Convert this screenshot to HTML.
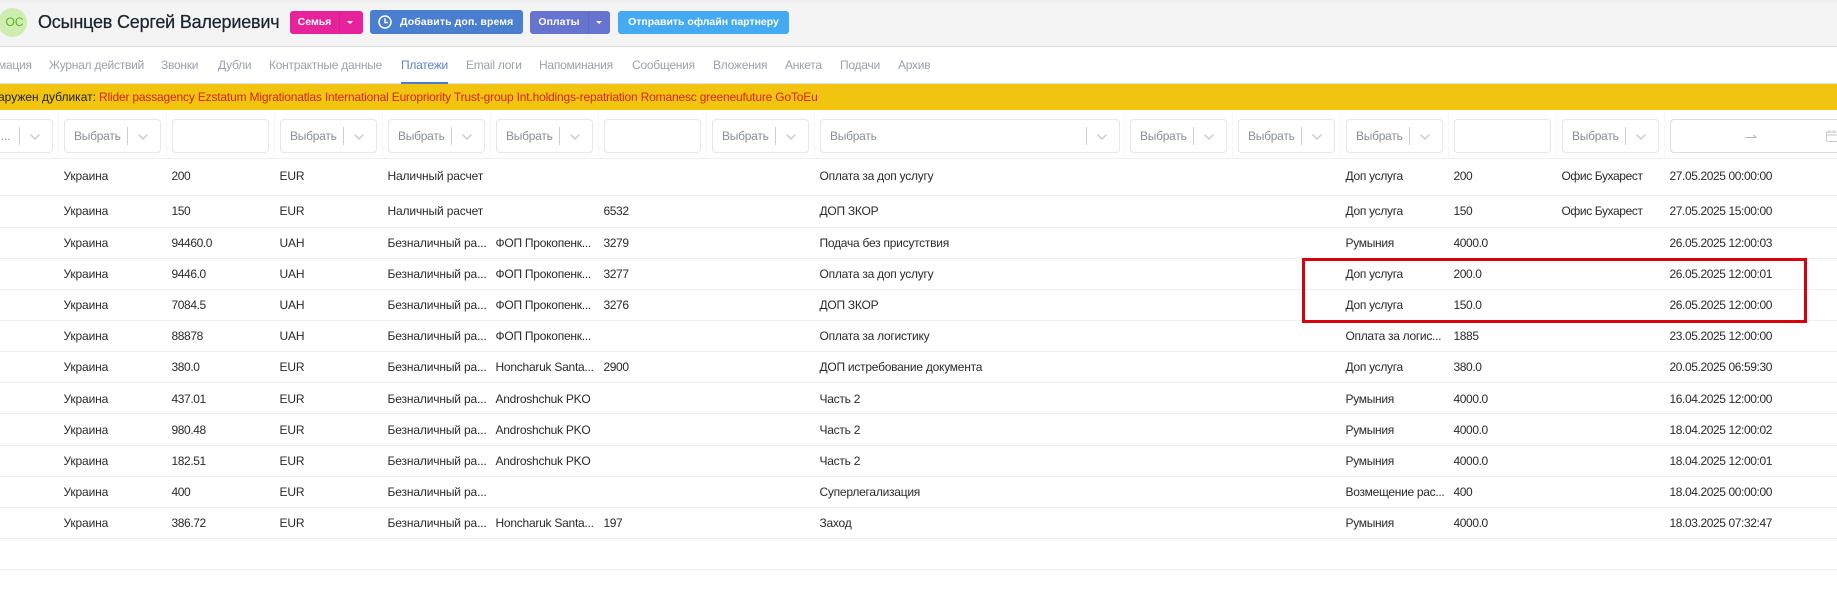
<!DOCTYPE html>
<html lang="ru"><head><meta charset="utf-8"><title>Платежи</title>
<style>
*{box-sizing:border-box}
html,body{margin:0;padding:0;width:1837px;height:591px;overflow:hidden;background:#fff}
body{position:relative;font-family:"Liberation Sans",sans-serif;font-size:12px;color:#222}
.a{position:absolute;white-space:nowrap}
.hd{left:0;top:0;width:1837px;height:47px;background:linear-gradient(#ececec 0,#f4f4f4 5px);border-bottom:1px solid #dcdcdc}
.av{left:-2px;top:8px;width:29px;height:29px;border-radius:50%;background:#cdeeb0;color:#5cb318;font-size:12px;line-height:29px;text-align:center;padding-left:4px}
.nm{left:38px;top:10px;font-size:18px;line-height:24px;color:#1c2430;font-weight:400;letter-spacing:-.2px;-webkit-text-stroke:.25px #1c2430}
.b{height:23px;top:11px;border-radius:3px;color:#fff;font-weight:700;font-size:10.5px;line-height:23px;text-align:center}
.d{top:0;bottom:0;width:1px;background:rgba(0,0,0,.07)}
.car{width:0;height:0;border-left:3.5px solid transparent;border-right:3.5px solid transparent;border-top:3.5px solid #fff;top:10px}
.t{top:57px;line-height:16px;color:#9ca1ae;font-size:12px;letter-spacing:-.25px}
.yl{left:0;top:84px;width:1837px;height:26px;background:#f1c40f;font-size:12px;line-height:26px}
.s{top:119px;height:34px;width:97px;background:#fff;border:1px solid #e4e7ee;border-radius:4px}
.s i{position:absolute;left:9px;top:0;line-height:32px;color:#888e99;font-style:normal;font-size:12px;letter-spacing:-.25px}
.s b{position:absolute;left:62px;top:7px;width:1px;height:18px;background:#cfcfcf}
.s svg{position:absolute;left:73px;top:14px}
.f{top:110px;width:1px;height:48px;background:#f6f6f6}
.l{left:0;width:1837px;height:1px;background:#efefef}
.r span{position:absolute;white-space:nowrap;line-height:16px;top:0;letter-spacing:-.15px}
.r{position:absolute;left:-.5px;width:1837px;height:16px;color:#2a2a2a}
.c1{left:64px}.c2{left:172px}.c3{left:280px}.c4{left:388px}.c5{left:496px}.c6{left:604px}.c7{left:820px}.c8{left:1346px}.c9{left:1454px}.c10{left:1562px}.c11{left:1670px}
.r .c2,.r .c6,.r .c9,.r .c11{letter-spacing:-.4px}
.r .c5,.r .c7{letter-spacing:-.25px}
.r .c8{letter-spacing:-.3px}
.r .c10{letter-spacing:-.4px}
.box{left:1302px;top:258px;width:505px;height:65px;border:3px solid #d8000f}
</style></head><body>
<div class="a hd"></div>
<div class="a av">ОС</div>
<div class="a nm">Осынцев Сергей Валериевич</div>

<div class="a b" style="left:290px;width:73px;background:#e6239b"><span class="a" style="left:0;width:49px">Семья</span><span class="a d" style="left:49px"></span><span class="a car" style="left:57px"></span></div>
<div class="a b" style="left:370px;top:10px;height:24px;width:153px;background:#4a7fd0;line-height:25px"><svg class="a" style="left:8px;top:5px" width="14" height="14" viewBox="0 0 14 14" fill="none" stroke="#fff" stroke-width="1.5"><circle cx="7" cy="7" r="6"/><path d="M7 3.2V7.5H10"/></svg><span class="a" style="left:30px;letter-spacing:.1px">Добавить доп. время</span></div>
<div class="a b" style="left:530px;width:80px;background:#6774cf"><span class="a" style="left:0;width:58px">Оплаты</span><span class="a d" style="left:58px"></span><span class="a car" style="left:66px"></span></div>
<div class="a b" style="left:618px;width:171px;background:#44aaf2">Отправить офлайн партнеру</div>

<div class="a t" style="left:-2px">мация</div>
<div class="a t" style="left:49px">Журнал действий</div>
<div class="a t" style="left:161px">Звонки</div>
<div class="a t" style="left:218px">Дубли</div>
<div class="a t" style="left:269px">Контрактные данные</div>
<div class="a t" style="left:401px;color:#5b82c4">Платежи</div>
<div class="a t" style="left:466px">Email логи</div>
<div class="a t" style="left:539px">Напоминания</div>
<div class="a t" style="left:632px">Сообщения</div>
<div class="a t" style="left:713px">Вложения</div>
<div class="a t" style="left:785px">Анкета</div>
<div class="a t" style="left:840px">Подачи</div>
<div class="a t" style="left:898px">Архив</div>
<div class="a" style="left:0;top:83px;width:1837px;height:1px;background:#e2e2e2"></div>
<div class="a" style="left:401px;top:82px;width:47px;height:2px;background:#4a7fd0"></div>

<div class="a yl"><span class="a" style="left:-2px;color:#222">аружен дубликат:</span><span class="a" style="left:99px;color:#d8231f;letter-spacing:-.18px">Rlider passagency Ezstatum Migrationatlas International Europriority Trust-group Int.holdings-repatriation Romanesc greeneufuture GoToEu</span></div>

<div class="a f" style="left:58px"></div><div class="a f" style="left:166px"></div><div class="a f" style="left:274px"></div><div class="a f" style="left:382px"></div><div class="a f" style="left:490px"></div><div class="a f" style="left:598px"></div><div class="a f" style="left:706px"></div><div class="a f" style="left:814px"></div><div class="a f" style="left:1124px"></div><div class="a f" style="left:1232px"></div><div class="a f" style="left:1340px"></div><div class="a f" style="left:1448px"></div><div class="a f" style="left:1556px"></div><div class="a f" style="left:1664px"></div>

<div class="a s" style="left:-44px"><i style="left:44px">...</i><b></b><svg width="10" height="6" viewBox="0 0 10 6" fill="none" stroke="#c6cad2" stroke-width="1.4"><path d="M.5 .5L5 5L9.5 .5"/></svg></div>
<div class="a s" style="left:64px"><i>Выбрать</i><b></b><svg width="10" height="6" viewBox="0 0 10 6" fill="none" stroke="#c6cad2" stroke-width="1.4"><path d="M.5 .5L5 5L9.5 .5"/></svg></div>
<div class="a s" style="left:172px"></div>
<div class="a s" style="left:280px"><i>Выбрать</i><b></b><svg width="10" height="6" viewBox="0 0 10 6" fill="none" stroke="#c6cad2" stroke-width="1.4"><path d="M.5 .5L5 5L9.5 .5"/></svg></div>
<div class="a s" style="left:388px"><i>Выбрать</i><b></b><svg width="10" height="6" viewBox="0 0 10 6" fill="none" stroke="#c6cad2" stroke-width="1.4"><path d="M.5 .5L5 5L9.5 .5"/></svg></div>
<div class="a s" style="left:496px"><i>Выбрать</i><b></b><svg width="10" height="6" viewBox="0 0 10 6" fill="none" stroke="#c6cad2" stroke-width="1.4"><path d="M.5 .5L5 5L9.5 .5"/></svg></div>
<div class="a s" style="left:604px"></div>
<div class="a s" style="left:712px"><i>Выбрать</i><b></b><svg width="10" height="6" viewBox="0 0 10 6" fill="none" stroke="#c6cad2" stroke-width="1.4"><path d="M.5 .5L5 5L9.5 .5"/></svg></div>
<div class="a s" style="left:820px;width:300px"><i>Выбрать</i><b style="left:265px"></b><svg style="left:276px" width="10" height="6" viewBox="0 0 10 6" fill="none" stroke="#c6cad2" stroke-width="1.4"><path d="M.5 .5L5 5L9.5 .5"/></svg></div>
<div class="a s" style="left:1130px"><i>Выбрать</i><b></b><svg width="10" height="6" viewBox="0 0 10 6" fill="none" stroke="#c6cad2" stroke-width="1.4"><path d="M.5 .5L5 5L9.5 .5"/></svg></div>
<div class="a s" style="left:1238px"><i>Выбрать</i><b></b><svg width="10" height="6" viewBox="0 0 10 6" fill="none" stroke="#c6cad2" stroke-width="1.4"><path d="M.5 .5L5 5L9.5 .5"/></svg></div>
<div class="a s" style="left:1346px"><i>Выбрать</i><b></b><svg width="10" height="6" viewBox="0 0 10 6" fill="none" stroke="#c6cad2" stroke-width="1.4"><path d="M.5 .5L5 5L9.5 .5"/></svg></div>
<div class="a s" style="left:1454px"></div>
<div class="a s" style="left:1562px"><i>Выбрать</i><b></b><svg width="10" height="6" viewBox="0 0 10 6" fill="none" stroke="#c6cad2" stroke-width="1.4"><path d="M.5 .5L5 5L9.5 .5"/></svg></div>
<div class="a s" style="left:1670px;width:180px;border-color:#dcdcdc"></div>
<svg class="a" style="left:1745px;top:134px" width="12" height="5" viewBox="0 0 12 5" fill="none" stroke="#b5b5b5" stroke-width="1"><path d="M0 3.5H11L8.5 1"/></svg>
<svg class="a" style="left:1826px;top:130px" width="11" height="12" viewBox="0 0 11 12" fill="none" stroke="#c8c8c8" stroke-width="1"><rect x=".5" y="2" width="12" height="9.5" rx="1"/><path d="M0 5H11M3 0V3M8 0V3"/></svg>

<div class="a l" style="top:158px"></div><div class="a l" style="top:195px"></div><div class="a l" style="top:227px"></div><div class="a l" style="top:258px"></div><div class="a l" style="top:289px"></div><div class="a l" style="top:320px"></div><div class="a l" style="top:351px"></div><div class="a l" style="top:382px"></div><div class="a l" style="top:413px"></div><div class="a l" style="top:445px"></div><div class="a l" style="top:476px"></div><div class="a l" style="top:507px"></div><div class="a l" style="top:538px"></div><div class="a l" style="top:569px"></div>

<div class="r" style="top:168px"><span class="c1">Украина</span><span class="c2">200</span><span class="c3">EUR</span><span class="c4">Наличный расчет</span><span class="c7">Оплата за доп услугу</span><span class="c8">Доп услуга</span><span class="c9">200</span><span class="c10">Офис Бухарест</span><span class="c11">27.05.2025 00:00:00</span></div>
<div class="r" style="top:203px"><span class="c1">Украина</span><span class="c2">150</span><span class="c3">EUR</span><span class="c4">Наличный расчет</span><span class="c6">6532</span><span class="c7">ДОП ЗКОР</span><span class="c8">Доп услуга</span><span class="c9">150</span><span class="c10">Офис Бухарест</span><span class="c11">27.05.2025 15:00:00</span></div>
<div class="r" style="top:235px"><span class="c1">Украина</span><span class="c2">94460.0</span><span class="c3">UAH</span><span class="c4">Безналичный ра...</span><span class="c5">ФОП Прокопенк...</span><span class="c6">3279</span><span class="c7">Подача без присутствия</span><span class="c8">Румыния</span><span class="c9">4000.0</span><span class="c11">26.05.2025 12:00:03</span></div>
<div class="r" style="top:266px"><span class="c1">Украина</span><span class="c2">9446.0</span><span class="c3">UAH</span><span class="c4">Безналичный ра...</span><span class="c5">ФОП Прокопенк...</span><span class="c6">3277</span><span class="c7">Оплата за доп услугу</span><span class="c8">Доп услуга</span><span class="c9">200.0</span><span class="c11">26.05.2025 12:00:01</span></div>
<div class="r" style="top:297px"><span class="c1">Украина</span><span class="c2">7084.5</span><span class="c3">UAH</span><span class="c4">Безналичный ра...</span><span class="c5">ФОП Прокопенк...</span><span class="c6">3276</span><span class="c7">ДОП ЗКОР</span><span class="c8">Доп услуга</span><span class="c9">150.0</span><span class="c11">26.05.2025 12:00:00</span></div>
<div class="r" style="top:328px"><span class="c1">Украина</span><span class="c2">88878</span><span class="c3">UAH</span><span class="c4">Безналичный ра...</span><span class="c5">ФОП Прокопенк...</span><span class="c7">Оплата за логистику</span><span class="c8">Оплата за логис...</span><span class="c9">1885</span><span class="c11">23.05.2025 12:00:00</span></div>
<div class="r" style="top:359px"><span class="c1">Украина</span><span class="c2">380.0</span><span class="c3">EUR</span><span class="c4">Безналичный ра...</span><span class="c5">Honcharuk Santa...</span><span class="c6">2900</span><span class="c7">ДОП истребование документа</span><span class="c8">Доп услуга</span><span class="c9">380.0</span><span class="c11">20.05.2025 06:59:30</span></div>
<div class="r" style="top:391px"><span class="c1">Украина</span><span class="c2">437.01</span><span class="c3">EUR</span><span class="c4">Безналичный ра...</span><span class="c5">Androshchuk PKO</span><span class="c7">Часть 2</span><span class="c8">Румыния</span><span class="c9">4000.0</span><span class="c11">16.04.2025 12:00:00</span></div>
<div class="r" style="top:422px"><span class="c1">Украина</span><span class="c2">980.48</span><span class="c3">EUR</span><span class="c4">Безналичный ра...</span><span class="c5">Androshchuk PKO</span><span class="c7">Часть 2</span><span class="c8">Румыния</span><span class="c9">4000.0</span><span class="c11">18.04.2025 12:00:02</span></div>
<div class="r" style="top:453px"><span class="c1">Украина</span><span class="c2">182.51</span><span class="c3">EUR</span><span class="c4">Безналичный ра...</span><span class="c5">Androshchuk PKO</span><span class="c7">Часть 2</span><span class="c8">Румыния</span><span class="c9">4000.0</span><span class="c11">18.04.2025 12:00:01</span></div>
<div class="r" style="top:484px"><span class="c1">Украина</span><span class="c2">400</span><span class="c3">EUR</span><span class="c4">Безналичный ра...</span><span class="c7">Суперлегализация</span><span class="c8">Возмещение рас...</span><span class="c9">400</span><span class="c11">18.04.2025 00:00:00</span></div>
<div class="r" style="top:515px"><span class="c1">Украина</span><span class="c2">386.72</span><span class="c3">EUR</span><span class="c4">Безналичный ра...</span><span class="c5">Honcharuk Santa...</span><span class="c6">197</span><span class="c7">Заход</span><span class="c8">Румыния</span><span class="c9">4000.0</span><span class="c11">18.03.2025 07:32:47</span></div>

<div class="a box"></div>
</body></html>
